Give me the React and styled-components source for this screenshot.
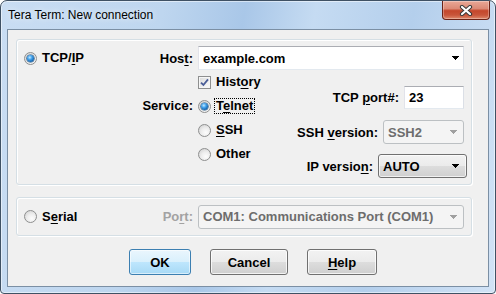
import React from 'react';
import styled, { createGlobalStyle, css } from 'styled-components';

const Global = createGlobalStyle`
  html, body { margin: 0; padding: 0; background: #ffffff; }
  body { font-family: "Liberation Sans", Arial, sans-serif; }
  #root { width: 496px; height: 294px; }
`;

const FONT = `bold 13px "Liberation Sans", Arial, sans-serif`;

const Window = styled.div`
  box-sizing: border-box;
  width: 496px;
  height: 294px;
  border: 1px solid #3f5164;
  border-radius: 7px 7px 4px 4px;
  background: linear-gradient(100deg, #c9ddf3 0%, #bed6ef 30%, #a9c7e8 45%, #c5dbf2 58%, #b4cfec 76%, #d2e3f6 100%);
  box-shadow: inset 0 0 0 1px rgba(255, 255, 255, 0.5);
  display: flex;
  flex-direction: column;
  padding: 0 6px 6px;
  overflow: hidden;
`;

const TitleBar = styled.div`
  height: 28px;
  margin: 0 -6px;
  padding: 0 5px 0 7px;
  display: flex;
  align-items: center;
  justify-content: space-between;
  flex: none;
`;

const Title = styled.span`
  font: 12px "Liberation Sans", Arial, sans-serif;
  color: #000;
  text-shadow: 0 0 6px rgba(255, 255, 255, 0.9);
`;

const CloseBtn = styled.div`
  align-self: flex-start;
  box-sizing: border-box;
  width: 48px;
  height: 19px;
  border: 1px solid #6b2317;
  border-top: none;
  border-radius: 0 0 4px 4px;
  background: linear-gradient(#e9a897 0%, #dc8a76 42%, #c4472c 54%, #c8553a 78%, #df8a6d 100%);
  box-shadow: inset 0 0 0 1px rgba(255, 255, 255, 0.3);
  display: flex;
  align-items: center;
  justify-content: center;
`;

const Client = styled.div`
  flex: 1;
  border: 1px solid #7b8fa4;
  background: #f0f0f0;
  display: flex;
  flex-direction: column;
  padding: 9px 16px 0 8px;
`;

const GroupBox = styled.div`
  box-sizing: border-box;
  height: ${(p) => p.$h}px;
  margin-top: ${(p) => p.$mt || 0}px;
  border: 1px solid #d5dfe5;
  border-radius: 3px;
  box-shadow: 1px 1px 0 #ffffff, inset 1px 1px 0 #ffffff;
  padding: ${(p) => p.$pad};
  display: flex;
  flex-direction: column;
`;

const Row = styled.div`
  display: flex;
  align-items: ${(p) => p.$align || 'center'};
  gap: 5px;
  height: ${(p) => (p.$h ? `${p.$h}px` : 'auto')};
`;

const LeftCol = styled.div`
  box-sizing: border-box;
  width: 176px;
  flex: none;
  display: flex;
  align-items: center;
  justify-content: space-between;
  padding-left: 7px;
  height: ${(p) => (p.$h ? `${p.$h}px` : 'auto')};
`;

const ServiceLabelCol = styled.div`
  width: 176px;
  flex: none;
  display: flex;
  flex-direction: column;
  align-items: flex-end;
  padding-top: 24px;
`;

const Label = styled.span`
  display: inline-block;
  font: ${FONT};
  color: ${(p) => (p.$disabled ? '#a2a2a2' : '#000')};
  white-space: nowrap;
  line-height: ${(p) => (p.$h ? `${p.$h}px` : '15px')};
`;

const Key = styled.u`
  text-decoration: underline;
  text-underline-offset: 2px;
`;

const MidCol = styled.div`
  width: 80px;
  flex: none;
  display: flex;
  flex-direction: column;
`;

const RightCol = styled.div`
  flex: 1;
  display: flex;
  flex-direction: column;
  align-items: flex-end;
  padding-top: 16px;
`;

const FieldRow = styled.div`
  display: flex;
  align-items: center;
  gap: 5px;
  height: ${(p) => p.$h}px;
  margin-top: ${(p) => p.$mt || 0}px;
  margin-right: ${(p) => p.$mr || 0}px;
`;

const OptionItem = styled.div`
  display: flex;
  align-items: center;
  height: ${(p) => (p.$h ? `${p.$h}px` : 'auto')};
`;

const OptionText = styled.span`
  font: ${FONT};
  color: #000;
  margin-left: 3px;
  padding: 0 1px;
  line-height: 14px;
  white-space: nowrap;
  border: 1px dotted ${(p) => (p.$focus ? '#000' : 'transparent')};
`;

const RadioCircle = styled.span`
  box-sizing: border-box;
  width: 13px;
  height: 13px;
  flex: none;
  border-radius: 50%;
  border: 1px solid #8e8f8f;
  background: radial-gradient(circle at 62% 68%, #fdfdfd 0%, #ededed 45%, #cbcbcb 100%);
  position: relative;
  ${(p) =>
    p.$checked &&
    css`
      &::after {
        content: '';
        position: absolute;
        left: 2px;
        top: 2px;
        width: 7px;
        height: 7px;
        border-radius: 50%;
        background: radial-gradient(circle at 40% 35%, #c4eaff 0%, #43a2ec 35%, #1464ad 72%, #0c3d70 100%);
        box-shadow: 0 0 0 0.6px #1d4f7c;
      }
    `}
`;

const CheckBox = styled.span`
  box-sizing: border-box;
  width: 13px;
  height: 13px;
  flex: none;
  border: 1px solid #8e8f8f;
  background: linear-gradient(135deg, #d9d9d9 0%, #f0f0f0 60%, #fbfbfb 100%);
  box-shadow: inset 0 0 0 1px #f6f6f6;
  display: flex;
  align-items: center;
  justify-content: center;
`;

const TextField = styled.div`
  box-sizing: border-box;
  width: ${(p) => p.$w}px;
  height: ${(p) => p.$h}px;
  background: #ffffff;
  border: 1px solid;
  border-color: #abadb3 #dbdfe6 #e3e9ef #e2e3ea;
  display: flex;
  align-items: center;
  justify-content: space-between;
  padding: 0 4px;
  font: ${FONT};
  color: #000;
`;

const Select = styled.div`
  box-sizing: border-box;
  width: ${(p) => p.$w}px;
  height: 24px;
  border-radius: 3px;
  display: flex;
  align-items: center;
  justify-content: space-between;
  padding: 0 ${(p) => p.$pr || 6}px 0 4px;
  font: ${FONT};
  white-space: nowrap;
  ${(p) =>
    p.$disabled
      ? css`
          border: 1px solid #bcc0c3;
          background: #f4f4f4;
          color: #6d6d6d;
        `
      : css`
          border: 1px solid #707070;
          background: linear-gradient(#f2f2f2 0%, #ebebeb 50%, #dddddd 51%, #cfcfcf 100%);
          box-shadow: inset 0 0 0 1px rgba(255, 255, 255, 0.7);
          color: #000;
        `}
`;

const ButtonRow = styled.div`
  display: flex;
  gap: 19px;
  margin-top: 13px;
  padding-left: 113px;
`;

const Button = styled.div`
  box-sizing: border-box;
  width: ${(p) => p.$w}px;
  height: 26px;
  border-radius: 3px;
  display: flex;
  align-items: center;
  justify-content: center;
  font: ${FONT};
  color: #000;
  ${(p) =>
    p.$default
      ? css`
          border: 1px solid #3c7fb1;
          background: linear-gradient(#eaf6fd 0%, #d9f0fc 50%, #bee6fd 51%, #a7d9f5 100%);
          box-shadow: inset 0 0 0 1px rgba(255, 255, 255, 0.55);
        `
      : css`
          border: 1px solid #707070;
          background: linear-gradient(#f2f2f2 0%, #ebebeb 50%, #dddddd 51%, #cfcfcf 100%);
          box-shadow: inset 0 0 0 1px rgba(255, 255, 255, 0.75);
        `}
`;

const Arrow = ({ color = '#000' }) => (
  <svg width="7" height="4" viewBox="0 0 7 4" shapeRendering="crispEdges">
    <path d="M0 0h7v1h-1v1h-1v1h-1v1h-1v-1h-1v-1h-1v-1h-1z" fill={color} />
  </svg>
);

const CloseGlyph = () => (
  <svg width="14" height="11" viewBox="0 0 14 11">
    <path d="M3 2L11 9M11 2L3 9" stroke="#3a3a3a" strokeWidth="4.2" strokeLinecap="round" />
    <path d="M3 2L11 9M11 2L3 9" stroke="#ffffff" strokeWidth="2.2" strokeLinecap="round" />
  </svg>
);

const CheckMark = () => (
  <svg width="9" height="9" viewBox="0 0 9 9">
    <path d="M1 4.6L3.4 7L8 1.4" fill="none" stroke="#4b5e98" strokeWidth="1.8" />
  </svg>
);

const Radio = ({ checked, focus, children, h }) => (
  <OptionItem $h={h}>
    <RadioCircle $checked={checked} />
    <OptionText $focus={focus}>{children}</OptionText>
  </OptionItem>
);

export default function App() {
  return (
    <>
      <Global />
      <Window>
        <TitleBar>
          <Title>Tera Term: New connection</Title>
          <CloseBtn>
            <CloseGlyph />
          </CloseBtn>
        </TitleBar>
        <Client>
          <GroupBox $h={146} $pad="6px 7px 0 0">
            <Row $h={24}>
              <LeftCol $h={24}>
                <Radio checked>
                  TCP/<Key>I</Key>P
                </Radio>
                <Label>
                  Hos<Key>t</Key>:
                </Label>
              </LeftCol>
              <TextField $w={266} $h={24}>
                <span>example.com</span>
                <Arrow />
              </TextField>
            </Row>
            <Row $align="flex-start">
              <ServiceLabelCol>
                <Label $h={24}>Service:</Label>
              </ServiceLabelCol>
              <MidCol>
                <OptionItem $h={24}>
                  <CheckBox>
                    <CheckMark />
                  </CheckBox>
                  <OptionText>
                    Hist<Key>o</Key>ry
                  </OptionText>
                </OptionItem>
                <Radio checked focus h={24}>
                  T<Key>e</Key>lnet
                </Radio>
                <Radio h={24}>
                  <Key>S</Key>SH
                </Radio>
                <Radio h={24}>Other</Radio>
              </MidCol>
              <RightCol>
                <FieldRow $h={23}>
                  <Label>
                    TCP <Key>p</Key>ort#:
                  </Label>
                  <TextField $w={60} $h={23}>
                    23
                  </TextField>
                </FieldRow>
                <FieldRow $h={24} $mt={11}>
                  <Label>
                    SSH <Key>v</Key>ersion:
                  </Label>
                  <Select $w={81} $disabled>
                    <span>SSH2</span>
                    <Arrow color="#a0a0a0" />
                  </Select>
                </FieldRow>
                <FieldRow $h={24} $mt={10} $mr={-3}>
                  <Label>
                    IP versio<Key>n</Key>:
                  </Label>
                  <Select $w={89} $pr={7}>
                    <span>AUTO</span>
                    <Arrow />
                  </Select>
                </FieldRow>
              </RightCol>
            </Row>
          </GroupBox>
          <GroupBox $h={39} $mt={12} $pad="0 7px 0 0">
            <Row $h={37}>
              <LeftCol $h={37}>
                <Radio>
                  S<Key>e</Key>rial
                </Radio>
                <Label $disabled>
                  Po<Key>r</Key>t:
                </Label>
              </LeftCol>
              <Select $w={266} $disabled>
                <span>COM1: Communications Port (COM1)</span>
                <Arrow color="#a0a0a0" />
              </Select>
            </Row>
          </GroupBox>
          <ButtonRow>
            <Button $w={62} $default>
              OK
            </Button>
            <Button $w={78}>Cancel</Button>
            <Button $w={70}>
              <span>
                <Key>H</Key>elp
              </span>
            </Button>
          </ButtonRow>
        </Client>
      </Window>
    </>
  );
}
